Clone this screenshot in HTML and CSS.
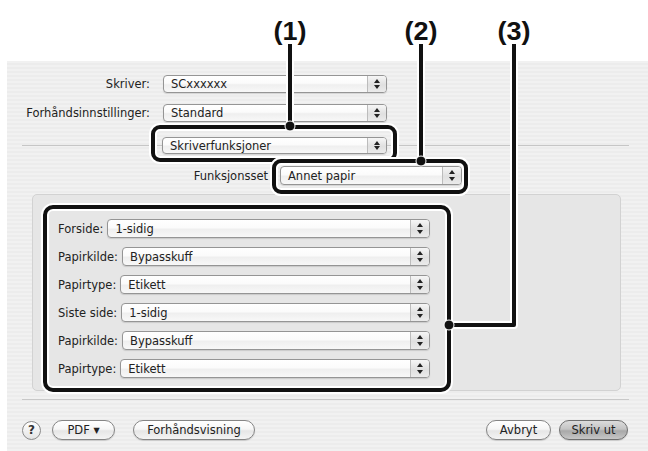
FILE: index.html
```html
<!DOCTYPE html>
<html lang="nb">
<head>
  <meta charset="UTF-8">
  <title>Skriv ut</title>
  <link rel="stylesheet" href="styles.css">
</head>
<body>
  <div class="page">
    <div class="dialog">
      <div class="top-row first">
        <span class="top-label">Skriver:</span>
        <div class="popup wide"><span class="value">SCxxxxxx</span><span class="arrows"></span></div>
      </div>
      <div class="top-row">
        <span class="top-label">Forhåndsinnstillinger:</span>
        <div class="popup wide"><span class="value">Standard</span><span class="arrows"></span></div>
      </div>

      <div class="divider-row">
        <span class="rule left"></span>
        <div class="popup pane"><span class="value">Skriverfunksjoner</span><span class="arrows"></span></div>
        <span class="rule"></span>
      </div>

      <div class="set-row">
        <span class="set-label">Funksjonsset</span>
        <div class="popup set"><span class="value">Annet papir</span><span class="arrows"></span></div>
      </div>

      <div class="panel">
        <div class="panel-rows">
          <div class="panel-row">
            <span class="row-label">Forside:</span>
            <div class="popup grow"><span class="value">1-sidig</span><span class="arrows"></span></div>
          </div>
          <div class="panel-row">
            <span class="row-label">Papirkilde:</span>
            <div class="popup grow"><span class="value">Bypasskuff</span><span class="arrows"></span></div>
          </div>
          <div class="panel-row">
            <span class="row-label">Papirtype:</span>
            <div class="popup grow"><span class="value">Etikett</span><span class="arrows"></span></div>
          </div>
          <div class="panel-row">
            <span class="row-label">Siste side:</span>
            <div class="popup grow"><span class="value">1-sidig</span><span class="arrows"></span></div>
          </div>
          <div class="panel-row">
            <span class="row-label">Papirkilde:</span>
            <div class="popup grow"><span class="value">Bypasskuff</span><span class="arrows"></span></div>
          </div>
          <div class="panel-row">
            <span class="row-label">Papirtype:</span>
            <div class="popup grow"><span class="value">Etikett</span><span class="arrows"></span></div>
          </div>
        </div>
      </div>

      <div class="separator"></div>

      <div class="button-row">
        <span class="help">?</span>
        <span class="btn pdf">PDF <span class="tri">▼</span></span>
        <span class="btn preview">Forhåndsvisning</span>
        <span class="spacer"></span>
        <span class="btn cancel">Avbryt</span>
        <span class="btn print">Skriv ut</span>
      </div>
    </div>

    <!-- callouts drawn over the dialog -->
    <svg class="callouts" width="648" height="451" viewBox="0 0 648 451">
      <g class="halo">
        <line x1="290" y1="44" x2="290" y2="126"/>
        <rect x="153" y="127" width="242" height="33" rx="7"/>
        <line x1="421" y1="44" x2="421" y2="161"/>
        <rect x="274" y="161" width="192" height="31" rx="7"/>
        <polyline points="514,44 514,325 449,325"/>
        <rect x="45" y="207" width="404" height="183" rx="8"/>
      </g>
      <g class="ink">
        <line x1="290" y1="44" x2="290" y2="126"/>
        <rect x="153" y="127" width="242" height="33" rx="7"/>
      </g>
      <g class="halo">
        <rect x="274" y="161" width="192" height="31" rx="7"/>
      </g>
      <g class="ink">
        <line x1="421" y1="44" x2="421" y2="161"/>
        <rect x="274" y="161" width="192" height="31" rx="7"/>
        <polyline points="514,44 514,325 449,325"/>
        <rect x="45" y="207" width="404" height="183" rx="8"/>
      </g>
      <circle class="dot" cx="290" cy="126" r="5"/>
      <circle class="dot" cx="421" cy="161" r="5"/>
      <circle class="dot" cx="449" cy="325" r="5"/>
      <text class="num" x="290" y="40" textLength="33" lengthAdjust="spacingAndGlyphs">(1)</text>
      <text class="num" x="421" y="40" textLength="33" lengthAdjust="spacingAndGlyphs">(2)</text>
      <text class="num" x="514" y="40" textLength="33" lengthAdjust="spacingAndGlyphs">(3)</text>
    </svg>
  </div>
</body>
</html>
```
FILE: styles.css
```css
body { margin: 0; background: #fff; font-family: "DejaVu Sans", sans-serif; font-size: 11.5px; color: #222; }
.page { position: relative; width: 648px; height: 451px; padding-top: 61px; box-sizing: border-box; overflow: hidden; }

.dialog {
  margin-left: 7px;
  height: 390px;
  background: repeating-linear-gradient(#f1f1f1 0 2px, #ececec 2px 4px);
  display: flex;
  flex-direction: column;
}

/* popup menus */
.popup {
  display: flex;
  align-items: center;
  height: 18px;
  box-sizing: border-box;
  border: 1px solid #959595;
  border-radius: 4px;
  background: linear-gradient(#ffffff 0%, #fbfbfb 45%, #efefef 55%, #f8f8f8 100%);
  box-shadow: 0 1px 1px rgba(0,0,0,0.12);
}
.popup .value { flex: 1; padding-left: 7px; white-space: nowrap; overflow: hidden; }
.popup .arrows {
  position: relative;
  width: 18px;
  align-self: stretch;
  border-left: 1px solid #bcbcbc;
  border-radius: 0 3px 3px 0;
  background: linear-gradient(#f6f6f6, #e0e0e0 55%, #ebebeb);
}
.popup .arrows::before,
.popup .arrows::after {
  content: "";
  position: absolute;
  left: 6px;
  border-left: 3px solid transparent;
  border-right: 3px solid transparent;
}
.popup .arrows::before { top: 3px; border-bottom: 4px solid #222; }
.popup .arrows::after { bottom: 3px; border-top: 4px solid #222; }

.top-row { display: flex; align-items: center; height: 18px; margin-top: 11px; }
.top-row.first { margin-top: 14px; }
.top-label { width: 143px; padding-right: 13px; text-align: right; box-sizing: content-box; }
.popup.wide { width: 224px; }

.divider-row { display: flex; align-items: center; height: 17px; margin: 15px 19px 0 15px; }
.rule { flex: 1; border-top: 1px solid #c6c6c6; }
.rule.left { flex: none; width: 140px; }
.popup.pane { width: 225px; height: 17px; }

.set-row { display: flex; align-items: center; height: 19px; margin-top: 12px; }
.set-label { width: 261px; padding-right: 12px; text-align: right; box-sizing: content-box; }
.popup.set { width: 182px; height: 19px; }

.panel {
  margin: 9px 0 0 25px;
  width: 589px;
  height: 197px;
  box-sizing: border-box;
  border: 1px solid #d2d2d2;
  border-radius: 5px;
  background: #e6e6e6;
}
.panel-rows { display: flex; flex-direction: column; gap: 9px; width: 372px; padding: 24px 0 0 25px; }
.panel-row { display: flex; align-items: center; gap: 4px; height: 19px; }
.popup.grow { flex: 1; height: 19px; }

.separator { margin: 8px 0 0 15px; width: 607px; border-top: 1px solid #c8c8c8; }

.button-row { display: flex; align-items: center; height: 20px; margin: 20px 20px 0 15px; }
.spacer { flex: 1; }
.help {
  width: 19px;
  height: 19px;
  box-sizing: border-box;
  border: 1px solid #8a8a8a;
  border-radius: 50%;
  background: linear-gradient(#ffffff, #e4e4e4);
  text-align: center;
  line-height: 17px;
  font-weight: bold;
  font-size: 12px;
  color: #333;
}
.btn {
  height: 20px;
  box-sizing: border-box;
  border: 1px solid #858585;
  border-radius: 10px;
  background: linear-gradient(#ffffff 0%, #f6f6f6 45%, #e6e6e6 55%, #f4f4f4 100%);
  box-shadow: 0 1px 1px rgba(0,0,0,0.15);
  text-align: center;
  line-height: 18px;
  white-space: nowrap;
}
.btn .tri { font-size: 8px; vertical-align: 1px; }
.btn.pdf { width: 63px; margin-left: 11px; }
.btn.preview { width: 122px; margin-left: 18px; }
.btn.cancel { width: 65px; }
.btn.print {
  width: 69px;
  margin-left: 8px;
  border-color: #6f6f6f;
  background: linear-gradient(#dcdcdc 0%, #c4c4c4 45%, #a9a9a9 55%, #c6c6c6 100%);
}

/* annotation overlay */
.callouts { position: absolute; left: 0; top: 0; pointer-events: none; }
.callouts line, .callouts rect, .callouts polyline { fill: none; stroke-linejoin: round; }
.halo line, .halo rect, .halo polyline { stroke: #fff; stroke-width: 8; }
.ink line, .ink rect, .ink polyline { stroke: #111; stroke-width: 4; }
.dot { fill: #111; stroke: #fff; stroke-width: 1; }
.num {
  font-family: "Liberation Sans", sans-serif;
  font-weight: bold;
  font-size: 25px;
  text-anchor: middle;
  fill: #111;
}
```
